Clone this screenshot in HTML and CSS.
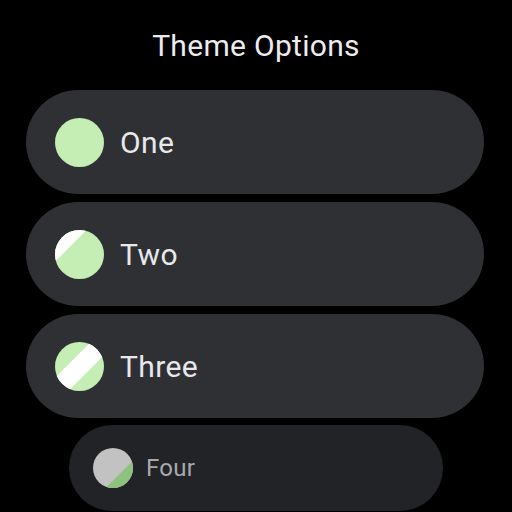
FILE: index.html
```html
<!DOCTYPE html>
<html lang="en">
<head>
    <meta charset="UTF-8">
    <title>Theme Options</title>
    <link rel="stylesheet" href="styles.css">
</head>
<body>
    <div class="screen">
        <h1 class="title">Theme Options</h1>

        <div class="list">
            <!-- Option one: solid primary -->
            <div class="chip">
                <svg class="swatch" viewBox="0 0 48 48">
                    <circle cx="24" cy="24" r="24" fill="#c4eeb3"/>
                </svg>
                <span class="label">One</span>
            </div>

            <!-- Option two: corner highlight -->
            <div class="chip">
                <svg class="swatch" viewBox="0 0 48 48">
                    <defs><clipPath id="c2"><circle cx="24" cy="24" r="24"/></clipPath></defs>
                    <g clip-path="url(#c2)">
                        <rect width="48" height="48" fill="#c4eeb3"/>
                        <polygon points="0,0 31,0 0,31" fill="#ffffff"/>
                    </g>
                </svg>
                <span class="label">Two</span>
            </div>

            <!-- Option three: diagonal band -->
            <div class="chip">
                <svg class="swatch" viewBox="0 0 48 48">
                    <defs><clipPath id="c3"><circle cx="24" cy="24" r="24"/></clipPath></defs>
                    <g clip-path="url(#c3)">
                        <rect width="48" height="48" fill="#c4eeb3"/>
                        <polygon points="35,0 48,0 48,13 13,48 0,48 0,35" fill="#ffffff"/>
                    </g>
                </svg>
                <span class="label">Three</span>
            </div>

            <!-- Option four: partially scrolled off -->
            <div class="chip chip-far">
                <svg class="swatch" viewBox="0 0 48 48">
                    <defs><clipPath id="c4"><circle cx="24" cy="24" r="24"/></clipPath></defs>
                    <g clip-path="url(#c4)">
                        <rect width="48" height="48" fill="#c2c2c2"/>
                        <polygon points="48,15 48,48 15,48" fill="#8ec27e"/>
                    </g>
                </svg>
                <span class="label">Four</span>
            </div>
        </div>
    </div>
</body>
</html>
```

FILE: styles.css
```css
/* Reset */
* {
    margin: 0;
    padding: 0;
    box-sizing: border-box;
}

body {
    width: 512px;
    height: 512px;
    overflow: hidden;
    background-color: #000;
    font-family: Roboto, "Noto Sans", sans-serif;
}

.screen {
    height: 512px;
    display: flex;
    flex-direction: column;
    align-items: stretch;
    padding-top: 29px;
}

/* Heading */
.title {
    font-size: 30px;
    font-weight: 400;
    letter-spacing: 0.3px;
    line-height: 34px;
    color: #ececee;
    text-align: center;
    margin-bottom: 27px;
}

/* Chip list */
.list {
    display: flex;
    flex-direction: column;
    gap: 8px;
    padding: 0 28px 0 26px;
}

.chip {
    height: 104px;
    border-radius: 52px;
    background-color: #2f3034;
    display: flex;
    align-items: center;
    gap: 16px;
    padding-left: 29px;
}

.swatch {
    width: 49px;
    height: 49px;
    flex-shrink: 0;
}

.label {
    font-size: 30px;
    font-weight: 400;
    letter-spacing: 0.4px;
    color: #e8e8eb;
}

/* Item shrinking away at the bottom edge */
.chip-far {
    margin: -1px 41px 0 43px;
    height: 86px;
    border-radius: 43px;
    background-color: #222326;
    padding-left: 24px;
    gap: 13px;
}

.chip-far .swatch {
    width: 40px;
    height: 40px;
}

.chip-far .label {
    font-size: 24px;
    letter-spacing: 0.3px;
    color: #a8a9ac;
}
```
